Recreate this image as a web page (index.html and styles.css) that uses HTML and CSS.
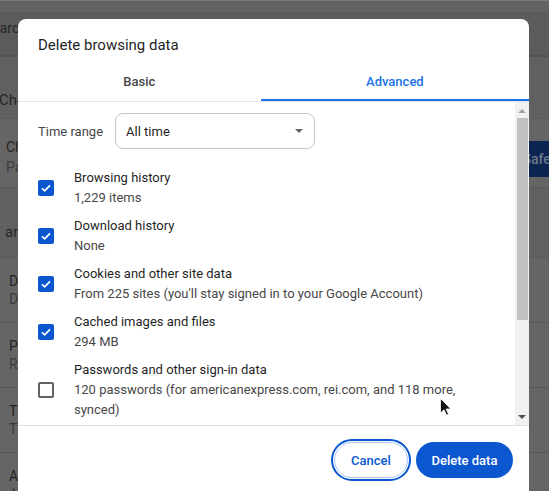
FILE: index.html
```html
<!DOCTYPE html>
<html lang="en">
<head>
<meta charset="utf-8">
<title>Delete browsing data</title>
<link rel="stylesheet" href="styles.css">
</head>
<body>
<div class="bg">
  <div class="bg-top"></div>
  <div class="bg-search"><span class="bg-search-text">Search settings</span></div>
  <div class="bg-heading">Check</div>
  <div class="bg-card bg-card-1">
    <div class="bg-lines">
      <div class="bg-row-title">Chrome is up to date</div>
      <div class="bg-row-sub">Passwords</div>
    </div>
    <div class="bg-btn">Safety check</div>
  </div>
  <div class="bg-heading bg-heading-2">and security</div>
  <div class="bg-card bg-card-2">
    <div class="bg-row"><div class="bg-row-title">Delete</div><div class="bg-row-sub">Delete</div></div>
    <div class="bg-row"><div class="bg-row-title">Privacy</div><div class="bg-row-sub">Review</div></div>
    <div class="bg-row"><div class="bg-row-title">Third</div><div class="bg-row-sub">Third</div></div>
    <div class="bg-row"><div class="bg-row-title">Ads</div><div class="bg-row-sub">Ads</div></div>
  </div>
</div>

<div class="dialog">
  <div class="dlg-title">Delete browsing data</div>
  <div class="tabs">
    <div class="tab">Basic</div>
    <div class="tab active">Advanced</div>
  </div>
  <div class="dlg-body">
    <div class="scroll-content">
      <div class="time-row">
        <span class="time-label">Time range</span>
        <div class="select"><span>All time</span><span class="caret"></span></div>
      </div>
      <div class="items">
        <div class="item">
          <span class="cb checked"><svg viewBox="0 0 16 16" width="16" height="16"><path d="M4 8.3 L6.7 10.8 L12 5.4" fill="none" stroke="#fff" stroke-width="1.7"/></svg></span>
          <div class="item-text"><div class="item-title">Browsing history</div><div class="item-sub">1,229 items</div></div>
        </div>
        <div class="item">
          <span class="cb checked"><svg viewBox="0 0 16 16" width="16" height="16"><path d="M4 8.3 L6.7 10.8 L12 5.4" fill="none" stroke="#fff" stroke-width="1.7"/></svg></span>
          <div class="item-text"><div class="item-title">Download history</div><div class="item-sub">None</div></div>
        </div>
        <div class="item">
          <span class="cb checked"><svg viewBox="0 0 16 16" width="16" height="16"><path d="M4 8.3 L6.7 10.8 L12 5.4" fill="none" stroke="#fff" stroke-width="1.7"/></svg></span>
          <div class="item-text"><div class="item-title">Cookies and other site data</div><div class="item-sub">From 225 sites (you'll stay signed in to your Google Account)</div></div>
        </div>
        <div class="item">
          <span class="cb checked"><svg viewBox="0 0 16 16" width="16" height="16"><path d="M4 8.3 L6.7 10.8 L12 5.4" fill="none" stroke="#fff" stroke-width="1.7"/></svg></span>
          <div class="item-text"><div class="item-title">Cached images and files</div><div class="item-sub">294 MB</div></div>
        </div>
        <div class="item">
          <span class="cb"></span>
          <div class="item-text"><div class="item-title">Passwords and other sign-in data</div><div class="item-sub">120 passwords (for americanexpress.com, rei.com, and 118 more, synced)</div></div>
        </div>
      </div>
    </div>
    <div class="scrollbar">
      <span class="sb-arrow sb-up"></span>
      <span class="sb-thumb"></span>
      <span class="sb-arrow sb-down"></span>
    </div>
  </div>
  <div class="footer">
    <button class="btn btn-cancel">Cancel</button>
    <button class="btn btn-primary">Delete data</button>
  </div>
</div>

<svg class="cursor" viewBox="0 0 12 18" width="12" height="18"><path d="M0.5 0.5 L0.5 15 L4 11.8 L6.6 17.2 L8.6 16.3 L6.1 11 L10.8 11 Z" fill="#111" stroke="#fff" stroke-width="0.8"/></svg>
</body>
</html>
```

FILE: styles.css
```css
html, body {
  margin: 0;
  padding: 0;
}
body {
  width: 549px;
  height: 491px;
  overflow: hidden;
  position: relative;
  font-family: Roboto, "Liberation Sans", sans-serif;
  background: #606060;
}

/* dimmed settings page behind the dialog */
.bg {
  width: 549px;
  height: 491px;
  overflow: hidden;
  background: #606060;
  color: #262626;
}
.bg-top {
  height: 12px;
  box-sizing: border-box;
  border-top: 1px solid #7a7a7a;
  background: #636363;
}
.bg-search {
  height: 45px;
  box-sizing: border-box;
  background: #5a5b5c;
  border-bottom: 2px solid #525252;
  font-size: 14px;
  line-height: 20px;
  padding-top: 6px;
  color: #262626;
}
.bg-search-text {
  display: inline-block;
  margin-left: -16px;
}
.bg-heading {
  height: 61px;
  box-sizing: border-box;
  padding-top: 33px;
  font-size: 15px;
  line-height: 20px;
  margin-left: -1px;
  color: #262626;
}
.bg-heading-2 {
  height: 69px;
  padding-top: 34px;
  margin-left: 0;
  text-indent: 5px;
  letter-spacing: 0.2px;
}
.bg-card {
  background: #656565;
  border-top: 1px solid #5a5a5a;
  border-bottom: 1px solid #5a5a5a;
}
.bg-card-1 {
  height: 70px;
  box-sizing: border-box;
  display: flex;
  justify-content: space-between;
  padding: 18px 0 0 6px;
}
.bg-row-title {
  font-size: 14px;
  line-height: 20px;
  color: #242424;
}
.bg-row-sub {
  font-size: 14px;
  line-height: 20px;
  color: #3c3c3c;
}
.bg-btn {
  height: 36px;
  margin-top: 4px;
  margin-right: -68px;
  padding: 0 14px 0 16px;
  background: #0b2450;
  color: #6b778a;
  font-size: 14px;
  font-weight: 500;
  line-height: 36px;
  border-radius: 4px 0 0 4px;
}
.bg-card-2 {
  border-bottom: none;
}
.bg-row {
  height: 65px;
  box-sizing: border-box;
  padding: 14px 0 0 9px;
  border-bottom: 1px solid #585858;
}
.bg-card-2 .bg-row-title,
.bg-card-2 .bg-row-sub {
  line-height: 18px;
}

/* dialog */
.dialog {
  position: absolute;
  left: 18px;
  top: 19px;
  width: 511px;
  height: 490px;
  background: #fff;
  border-radius: 8px;
  display: flex;
  flex-direction: column;
  overflow: hidden;
  color: #1f1f1f;
}
.dlg-title {
  height: 44px;
  box-sizing: border-box;
  padding: 16px 20px 0;
  font-size: 15px;
  line-height: 20px;
  color: #1f1f1f;
  flex: none;
}
.tabs {
  display: flex;
  height: 39px;
  box-sizing: border-box;
  border-bottom: 1px solid #e3e3e3;
  flex: none;
}
.tab {
  flex: 1 1 auto;
  display: flex;
  align-items: center;
  justify-content: center;
  font-size: 13px;
  font-weight: 500;
  color: #474747;
  border-bottom: 2px solid transparent;
}
.tab.active {
  color: #1a73e8;
  border-bottom-color: #1a73e8;
}
.dlg-body {
  display: flex;
  height: 324px;
  box-sizing: border-box;
  border-bottom: 1px solid #e0e0e0;
  flex: none;
}
.scroll-content {
  flex: 1;
  min-width: 0;
  padding: 11px 18px 0 20px;
  overflow: hidden;
}
.time-row {
  display: flex;
  align-items: center;
  gap: 12px;
  height: 36px;
  font-size: 13px;
}
.time-label {
  color: #474747;
}
.select {
  width: 200px;
  height: 36px;
  box-sizing: border-box;
  border: 1px solid #c7c7c7;
  border-radius: 8px;
  padding: 0 11px 0 10px;
  display: flex;
  align-items: center;
  justify-content: space-between;
  color: #1f1f1f;
}
.caret {
  width: 0;
  height: 0;
  border-left: 4px solid transparent;
  border-right: 4px solid transparent;
  border-top: 4px solid #5f6368;
}
.items {
  margin-top: 19px;
}
.item {
  display: flex;
  align-items: center;
  gap: 20px;
  min-height: 40px;
  margin-bottom: 8px;
}
.cb {
  flex: none;
  width: 16px;
  height: 16px;
  box-sizing: border-box;
  border-radius: 2px;
  border: 2px solid #5f6368;
  display: block;
}
.cb.checked {
  border: none;
  background: #0b57d0;
}
.cb svg {
  display: block;
}
.item-text {
  font-size: 13px;
  line-height: 20px;
}
.item-title {
  color: #1f1f1f;
}
.item-sub {
  color: #474747;
}
.scrollbar {
  width: 14px;
  flex: none;
  background: #f1f1f1;
  display: flex;
  flex-direction: column;
  align-items: center;
}
.sb-arrow {
  width: 0;
  height: 0;
  border-left: 4px solid transparent;
  border-right: 4px solid transparent;
}
.sb-up {
  border-bottom: 4px solid #a3a3a3;
  margin-top: 7px;
}
.sb-thumb {
  width: 11px;
  height: 202px;
  background: #c1c1c1;
  margin-top: 5px;
}
.sb-down {
  border-top: 4px solid #505050;
  margin-top: auto;
  margin-bottom: 6px;
}
.footer {
  display: flex;
  justify-content: flex-end;
  gap: 8px;
  padding: 16px 16px 0;
}
.btn {
  height: 36px;
  border-radius: 18px;
  font-family: Roboto, "Liberation Sans", sans-serif;
  font-size: 13px;
  font-weight: 500;
  padding: 0 16px;
  cursor: pointer;
}
.btn-cancel {
  background: #fff;
  color: #0b57d0;
  border: 1px solid #a8c7fa;
  outline: 2px solid #0b57d0;
  outline-offset: 1px;
  width: 74px;
  padding: 0;
}
.btn-primary {
  background: #0b57d0;
  color: #fff;
  border: none;
  width: 97px;
  padding: 0;
}
.cursor {
  position: absolute;
  left: 440px;
  top: 398px;
  width: 12px;
  height: 18px;
}
```
